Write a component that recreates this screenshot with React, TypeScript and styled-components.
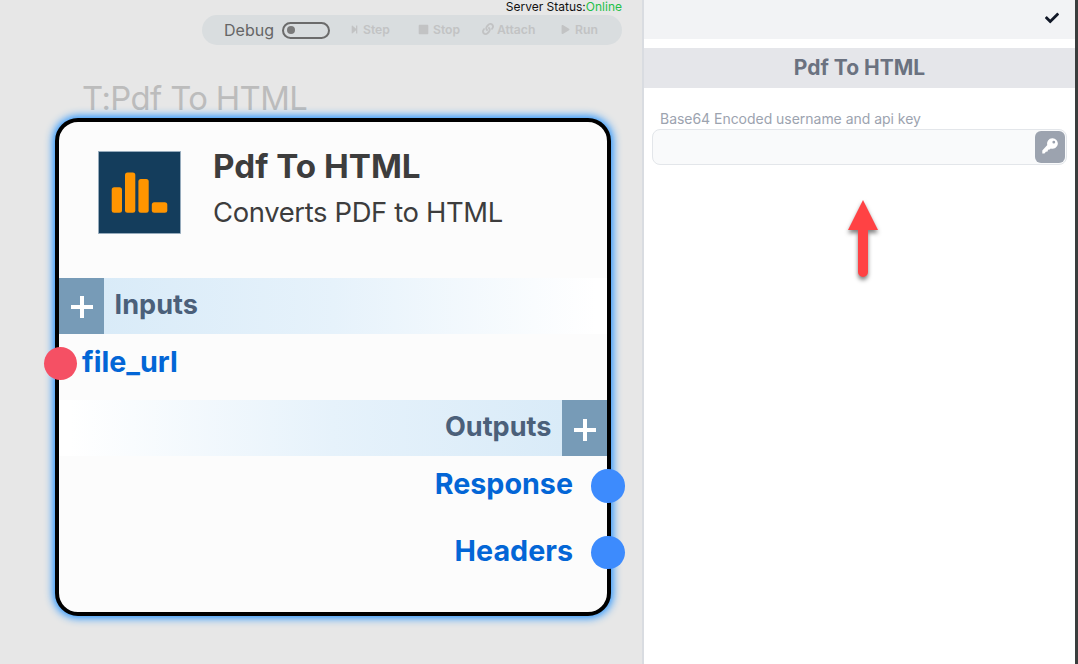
import React from 'react';
import styled, { createGlobalStyle } from 'styled-components';
import { FaCheck, FaLink, FaPlay, FaStepForward, FaStop } from 'react-icons/fa';

const GlobalStyle = createGlobalStyle`
  * { box-sizing: border-box; }
  body { margin: 0; background: #fff; font-family: Inter, "Liberation Sans", sans-serif; }
`;

const Page = styled.div`
  display: flex;
  width: 1078px;
  height: 664px;
  overflow: hidden;
`;

const Canvas = styled.main`
  position: relative;
  width: 642px;
  background: #e7e7e7;
`;

const TopBar = styled.header`
  display: flex;
  flex-direction: column;
  align-items: flex-end;
  padding-right: 20px;
`;

const Status = styled.div`
  height: 15px;
  line-height: 14px;
  font-size: 12px;
  color: #111;
`;

const Online = styled.span`
  color: #22c048;
`;

const Toolbar = styled.div`
  display: flex;
  align-items: center;
  width: 420px;
  height: 30px;
  padding-left: 22px;
  border-radius: 15px;
  background: #d9dddf;
`;

const DebugLabel = styled.span`
  width: 58px;
  font-size: 16px;
  line-height: 30px;
  color: #666;
`;

const Toggle = styled.div`
  display: flex;
  align-items: center;
  width: 48px;
  height: 17px;
  margin-right: 20px;
  padding-left: 3px;
  border: 2px solid #6b6b6b;
  border-radius: 9px;
`;

const Knob = styled.span`
  width: 8px;
  height: 8px;
  border-radius: 50%;
  background: #7a7a7a;
`;

const Action = styled.div<{ $width: number; $gap?: number }>`
  display: flex;
  align-items: center;
  gap: ${(p) => p.$gap ?? 4}px;
  width: ${(p) => p.$width}px;
  font-size: 12.2px;
  font-weight: 600;
  line-height: 30px;
  color: #c2c3c4;
  white-space: nowrap;

  svg {
    position: relative;
    top: -1px;
  }
`;

const Node = styled.section`
  position: absolute;
  left: 55px;
  top: 118px;
  width: 556px;
  height: 498px;
  border: 4px solid #000;
  border-radius: 23px;
  background: #fcfcfc;
  box-shadow: 0 0 8px 2px #1e90ff;
`;

const NodeCaption = styled.div`
  position: absolute;
  left: 82px;
  top: 78px;
  font-size: 32.8px;
  font-weight: 400;
  letter-spacing: -0.6px;
  line-height: 40px;
  color: #bcbcbc;
  white-space: nowrap;
`;

const NodeHead = styled.div`
  display: flex;
  height: 156px;
  padding: 29px 0 0 39px;
`;

const HeadText = styled.div`
  margin: -8px 0 0 32px;
  color: #3d3d3d;
  white-space: nowrap;
`;

const NodeTitle = styled.h2`
  margin: 0;
  font-size: 33.2px;
  font-weight: 700;
  line-height: 46px;
`;

const NodeText = styled.p`
  margin: 0;
  font-size: 27.4px;
  font-weight: 400;
  letter-spacing: -0.35px;
  line-height: 47px;
`;

const SectionBar = styled.div<{ $reverse?: boolean }>`
  display: flex;
  flex-direction: ${(p) => (p.$reverse ? 'row-reverse' : 'row')};
  height: 55.7px;
  background: linear-gradient(${(p) => (p.$reverse ? '270deg' : '90deg')}, #d9ebf8 8%, #e6f2fb 50%, #fff 98%);
`;

const AddButton = styled.div`
  display: flex;
  align-items: center;
  justify-content: center;
  width: 44.6px;
  padding: 3px 0 0 1px;
  background: #779bb7;
`;

const SectionName = styled.div`
  padding: 0 11px;
  font-size: 27.1px;
  font-weight: 700;
  line-height: 53px;
  color: #4b607a;
`;

const PortRow = styled.div<{ $out?: boolean }>`
  display: flex;
  flex-direction: ${(p) => (p.$out ? 'row-reverse' : 'row')};
  align-items: center;
  gap: ${(p) => (p.$out ? 18 : 5)}px;
  height: 66.7px;
  margin: 0 ${(p) => (p.$out ? -17.5 : 0)}px 0 ${(p) => (p.$out ? 0 : -15.5)}px;
  padding-bottom: 7px;
`;

const Port = styled.span<{ $color: string }>`
  width: 33.5px;
  height: 33.5px;
  border-radius: 50%;
  background: ${(p) => p.$color};
`;

const PortName = styled.span`
  padding-bottom: 3.6px;
  font-size: 28.7px;
  font-weight: 700;
  line-height: 40px;
  color: #0366d6;
`;

const Panel = styled.aside`
  flex: 1;
  border-left: 2px solid #d9dce1;
  border-right: 3px solid #3a3d3d;
  background: #fff;
`;

const PanelTop = styled.div`
  display: flex;
  align-items: center;
  justify-content: flex-end;
  height: 39px;
  padding: 0 16px 3px 0;
  color: #111827;
  background: #f2f3f5;
`;

const PanelTitle = styled.h1`
  height: 40px;
  margin: 9px 0 0;
  font-size: 21px;
  font-weight: 700;
  line-height: 40px;
  text-align: center;
  color: #6b7280;
  background: #e5e6ea;
`;

const Field = styled.label`
  display: block;
  padding: 21px 8px 0;
`;

const FieldLabel = styled.span`
  display: block;
  padding-left: 8px;
  height: 20px;
  font-size: 14px;
  letter-spacing: -0.03px;
  line-height: 20px;
  color: #9ca3af;
`;

const FieldBox = styled.div`
  display: flex;
  align-items: center;
  justify-content: flex-end;
  height: 36px;
  padding-right: 1px;
  border: 1px solid #e3e6ea;
  border-radius: 8px;
  background: #f9fafb;
`;

const KeyButton = styled.div`
  display: flex;
  align-items: center;
  justify-content: center;
  width: 30px;
  height: 32px;
  padding-bottom: 2px;
  border-radius: 6px;
  color: #fff;
  background: #9ca3af;
`;

const Pointer = styled.svg`
  display: block;
  margin: 30px 0 0 194px;
  filter: drop-shadow(0 3px 2px rgba(0, 0, 0, 0.5));
`;

const Plus = () => (
  <svg width="22" height="22" viewBox="0 0 22 22">
    <path d="M11 0v22M0 11h22" stroke="#fff" strokeWidth="4" />
  </svg>
);

const KeyIcon = () => (
  <svg width="16" height="16" viewBox="0 0 16 16" fill="currentColor">
    <path
      fillRule="evenodd"
      d="M10.2.2a5.3 5.3 0 1 1-1.4 10.3L7.6 11.6 6 11.8 5.6 13.4 3.9 13.7 2.5 15.6H.3V12.4L5.3 7A5.3 5.3 0 0 1 10.2.2ZM11.8 2.8a1.4 1.4 0 1 0 0 2.8 1.4 1.4 0 0 0 0-2.8Z"
    />
  </svg>
);

const ChartLogo = () => (
  <svg width="83" height="83" viewBox="0 0 83 83">
    <rect x=".5" y=".5" width="82" height="82" fill="#143d5c" stroke="#9aafc0" strokeWidth=".8" />
    <g fill="#ff9500">
      <rect x="13.7" y="36.3" width="10.3" height="25.4" rx="2.5" />
      <rect x="27" y="21.5" width="10.3" height="40.2" rx="2.5" />
      <rect x="40.4" y="28" width="10.3" height="33.7" rx="2.5" />
      <rect x="53.8" y="51.3" width="15.5" height="10.4" rx="2.5" />
    </g>
  </svg>
);

export default function App() {
  return (
    <>
      <GlobalStyle />
      <Page>
        <Canvas>
          <TopBar>
            <Status>Server Status:<Online>Online</Online></Status>
            <Toolbar>
              <DebugLabel>Debug</DebugLabel>
              <Toggle><Knob /></Toggle>
              <Action $width={68} $gap={4}><FaStepForward size={9} />Step</Action>
              <Action $width={64} $gap={4}><FaStop size={11} />Stop</Action>
              <Action $width={79} $gap={3}><FaLink size={12} />Attach</Action>
              <Action $width={50} $gap={5}><FaPlay size={9} />Run</Action>
            </Toolbar>
          </TopBar>
          <NodeCaption>T:Pdf To HTML</NodeCaption>
          <Node>
            <NodeHead>
              <ChartLogo />
              <HeadText>
                <NodeTitle>Pdf To HTML</NodeTitle>
                <NodeText>Converts PDF to HTML</NodeText>
              </HeadText>
            </NodeHead>
            <SectionBar>
              <AddButton><Plus /></AddButton>
              <SectionName>Inputs</SectionName>
            </SectionBar>
            <PortRow><Port $color="#f55064" /><PortName>file_url</PortName></PortRow>
            <SectionBar $reverse>
              <AddButton><Plus /></AddButton>
              <SectionName>Outputs</SectionName>
            </SectionBar>
            <PortRow $out><Port $color="#3d8bfd" /><PortName>Response</PortName></PortRow>
            <PortRow $out><Port $color="#3d8bfd" /><PortName>Headers</PortName></PortRow>
          </Node>
        </Canvas>
        <Panel>
          <PanelTop><FaCheck size={14} /></PanelTop>
          <PanelTitle>Pdf To HTML</PanelTitle>
          <Field>
            <FieldLabel>Base64 Encoded username and api key</FieldLabel>
            <FieldBox><KeyButton><KeyIcon /></KeyButton></FieldBox>
          </Field>
          <Pointer width="50" height="90" viewBox="0 0 50 90">
            <path d="M25 5 40 35H30V77a5 5 0 0 1-10 0V35H10Z" fill="#ff4244" />
          </Pointer>
        </Panel>
      </Page>
    </>
  );
}
